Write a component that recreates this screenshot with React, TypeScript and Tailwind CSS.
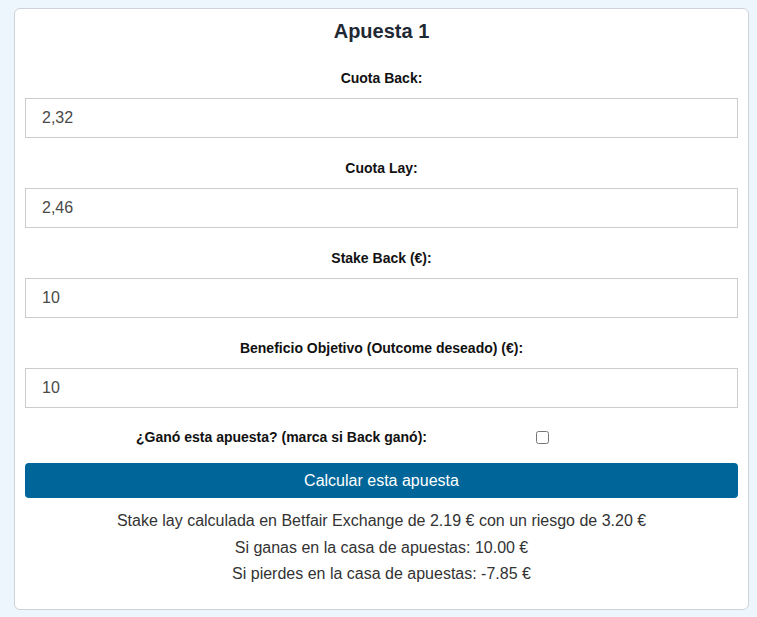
import React, { useState } from 'react';

const fields = [
    { label: 'Cuota Back:', value: '2,32' },
    { label: 'Cuota Lay:', value: '2,46' },
    { label: 'Stake Back (€):', value: '10' },
    { label: 'Beneficio Objetivo (Outcome deseado) (€):', value: '10' },
];

const App: React.FC = () => {
    const [values, setValues] = useState(fields.map((f) => f.value));
    const [won, setWon] = useState(false);

    return (
        <div className="min-h-[617px] bg-[#eef6fd] pt-2 font-['Liberation_Sans',Arial,sans-serif]">
            <div className="ml-[14px] w-[735px] rounded-md border border-[#cdd3d9] bg-white px-[10px] pt-[10px] pb-[21px]">
                <h2 className="text-center text-[20px] font-bold leading-[24px] text-[#1f2933]">Apuesta 1</h2>

                {fields.map((f, i) => (
                    <div key={f.label} className={i === 0 ? 'mt-[27px]' : 'mt-[22px]'}>
                        <label className="mb-3 block text-center text-[14px] font-bold leading-4 text-[#111]">
                            {f.label}
                        </label>
                        <input
                            type="text"
                            value={values[i]}
                            onChange={(e) => {
                                const next = [...values];
                                next[i] = e.target.value;
                                setValues(next);
                            }}
                            className="block h-10 w-full border border-[#cccccc] bg-white px-4 text-[16px] text-[#4a4a4a] outline-none"
                        />
                    </div>
                ))}

                <div className="mt-[21px] flex items-center">
                    <label className="ml-[111px] w-[291px] whitespace-nowrap text-center text-[14px] font-bold leading-4 text-[#111]">
                        ¿Ganó esta apuesta? (marca si Back ganó):
                    </label>
                    <input
                        type="checkbox"
                        checked={won}
                        onChange={(e) => setWon(e.target.checked)}
                        className="m-0 ml-[109px] h-[13px] w-[13px]"
                    />
                </div>

                <button className="mt-[18px] h-[35px] w-full rounded bg-[#006699] text-[16px] text-white">
                    Calcular esta apuesta
                </button>

                <div className="mt-[10px] text-center text-[16px] leading-[26.5px] text-[#333]">
                    <p>Stake lay calculada en Betfair Exchange de 2.19 € con un riesgo de 3.20 €</p>
                    <p>Si ganas en la casa de apuestas: 10.00 €</p>
                    <p>Si pierdes en la casa de apuestas: -7.85 €</p>
                </div>
            </div>
        </div>
    );
};

export default App;
